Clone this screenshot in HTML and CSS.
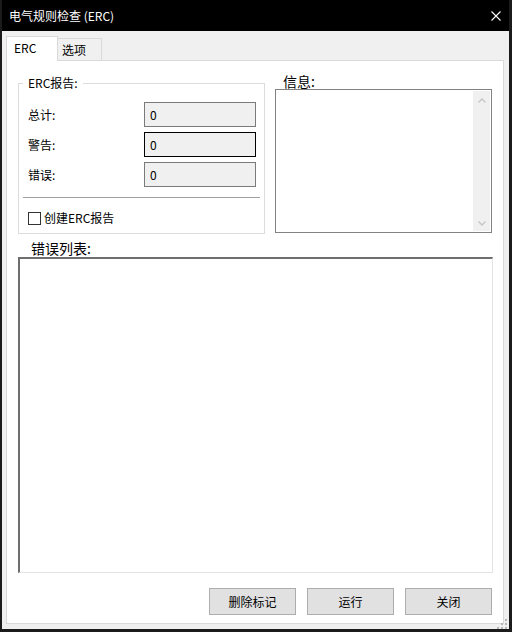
FILE: index.html
```html
<!DOCTYPE html>
<html lang="zh-CN">
<head>
    <meta charset="UTF-8">
    <meta name="viewport" content="width=device-width, initial-scale=1.0">
    <title>电气规则检查 (ERC)</title>
    <link rel="stylesheet" href="styles.css">
</head>
<body>
    <div class="window">
        <div class="titlebar">
            <span class="title">电气规则检查 (ERC)</span>
            <svg class="close" width="10" height="10" viewBox="0 0 10 10">
                <path d="M0.5 0.5 L9.5 9.5 M9.5 0.5 L0.5 9.5" stroke="#fff" stroke-width="1.1" fill="none"/>
            </svg>
        </div>

        <div class="client">
            <div class="tabs">
                <div class="tab active">ERC</div>
                <div class="tab">选项</div>
            </div>

            <div class="panel">
                <div class="top-row">
                    <fieldset class="group">
                        <legend>ERC报告:</legend>
                        <div class="fields">
                            <span class="label">总计:</span>
                            <div class="field">0</div>
                            <span class="label">警告:</span>
                            <div class="field focus">0</div>
                            <span class="label">错误:</span>
                            <div class="field">0</div>
                        </div>
                        <div class="sep"></div>
                        <label class="check"><span class="box"></span>创建ERC报告</label>
                    </fieldset>

                    <div class="info">
                        <div class="caption">信息:</div>
                        <div class="info-box">
                            <div class="scroll">
                                <svg width="8" height="5" viewBox="0 0 8 5"><path d="M0.5 4.5 L4 1 L7.5 4.5" stroke="#c4c4c4" stroke-width="1.3" fill="none"/></svg>
                                <svg width="8" height="5" viewBox="0 0 8 5"><path d="M0.5 0.5 L4 4 L7.5 0.5" stroke="#c4c4c4" stroke-width="1.3" fill="none"/></svg>
                            </div>
                        </div>
                    </div>
                </div>

                <div class="caption list-caption">错误列表:</div>
                <div class="list-box"></div>

                <div class="buttons">
                    <button>删除标记</button>
                    <button>运行</button>
                    <button>关闭</button>
                </div>
            </div>
        </div>

        <svg class="grip" width="12" height="10" viewBox="0 0 12 10">
            <rect x="9" y="0" width="2" height="2" fill="#b5b5b5"/>
            <rect x="5" y="4" width="2" height="2" fill="#b5b5b5"/>
            <rect x="9" y="4" width="2" height="2" fill="#b5b5b5"/>
            <rect x="1" y="8" width="2" height="2" fill="#b5b5b5"/>
            <rect x="5" y="8" width="2" height="2" fill="#b5b5b5"/>
            <rect x="9" y="8" width="2" height="2" fill="#b5b5b5"/>
        </svg>
    </div>
</body>
</html>
```

FILE: styles.css
```css
* {
    box-sizing: border-box;
}
body {
    margin: 0;
    font-family: "Noto Sans CJK SC", "Noto Sans", sans-serif;
    font-size: 12px;
    color: #000;
}
.window {
    position: relative;
    width: 512px;
    height: 632px;
    background: #f0f0f0;
    border-left: 2px solid #1b1b1b;
    border-right: 3px solid #1b1b1b;
    border-bottom: 3px solid #1b1b1b;
    display: flex;
    flex-direction: column;
}
.titlebar {
    height: 31px;
    flex: none;
    background: #000;
    color: #fff;
    display: flex;
    align-items: center;
    justify-content: space-between;
    padding: 0 8px 0 7px;
    line-height: 16px;
}
.client {
    flex: 1;
    display: flex;
    flex-direction: column;
    padding: 5px 5px 5px 4px;
}
.tabs {
    position: relative;
    z-index: 1;
    height: 24px;
    display: flex;
    align-items: flex-end;
}
.tab {
    height: 22px;
    width: 44px;
    padding: 3px 0 0 4px;
    line-height: 16px;
    background: #f0f0f0;
    border: 1px solid #d9d9d9;
    border-left: none;
    border-bottom: none;
}
.tab.active {
    height: 25px;
    width: 52px;
    margin-bottom: -1px;
    padding-left: 7px;
    background: #fff;
    border-left: 1px solid #d9d9d9;
}
.panel {
    flex: 1;
    display: flex;
    flex-direction: column;
    background: #fff;
    border: 1px solid #d9d9d9;
    padding: 12px 10px 8px 11px;
}
.top-row {
    display: flex;
    gap: 10px;
    margin-right: 1px;
}
.group {
    width: 247px;
    flex: none;
    margin: 2px 0 0 0;
    min-inline-size: 0;
    border: 1px solid #dcdcdc;
    padding: 11px 4px 7px 4px;
}
.group legend {
    padding: 0 5px;
    line-height: 16px;
}
.fields {
    display: grid;
    grid-template-columns: 116px 112px;
    row-gap: 5px;
    align-items: center;
    padding-left: 5px;
}
.label {
    line-height: 16px;
}
.field {
    height: 25px;
    line-height: 23px;
    padding-left: 5px;
    background: #f0f0f0;
    border: 1px solid #7a7a7a;
}
.field.focus {
    border-color: #000;
}
.sep {
    height: 1px;
    background: #a0a0a0;
    margin-top: 10px;
}
.check {
    display: flex;
    align-items: center;
    gap: 3px;
    margin-top: 12px;
    padding-left: 5px;
    line-height: 16px;
}
.check .box {
    width: 13px;
    height: 13px;
    background: #fff;
    border: 1px solid #333;
}
.info {
    flex: 1;
    display: flex;
    flex-direction: column;
}
.caption {
    font-size: 14px;
    line-height: 16px;
    padding-left: 8px;
}
.info-box {
    height: 144px;
    border: 1px solid #828282;
    padding: 1px;
    display: flex;
    justify-content: flex-end;
}
.scroll {
    width: 17px;
    background: #f0f0f0;
    display: flex;
    flex-direction: column;
    justify-content: space-between;
    align-items: center;
    padding: 7px 0 5px;
}
.scroll svg {
    display: block;
}
.list-caption {
    margin-top: 6px;
    margin-bottom: 1px;
    padding-left: 13px;
}
.list-box {
    flex: 1;
    background: #fff;
    border-top: 2px solid #6e6e6e;
    border-left: 2px solid #6e6e6e;
    border-right: 1px solid #e3e3e3;
    border-bottom: 1px solid #e3e3e3;
}
.buttons {
    display: flex;
    justify-content: flex-end;
    gap: 11px;
    margin-top: 15px;
    margin-right: 1px;
}
button {
    width: 87px;
    height: 27px;
    padding: 0;
    background: #e1e1e1;
    border: 1px solid #adadad;
    font-family: "Noto Sans CJK SC", "Noto Sans", sans-serif;
    font-size: 12px;
    color: #000;
}
.grip {
    position: absolute;
    right: 1px;
    bottom: 0;
}
```
